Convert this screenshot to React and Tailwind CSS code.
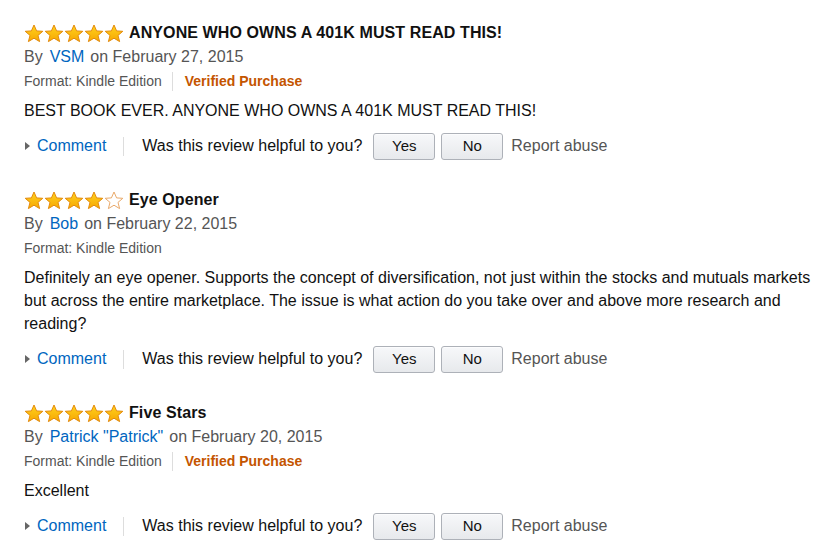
import React from 'react';

const reviews = [
  {
    rating: 5,
    title: 'ANYONE WHO OWNS A 401K MUST READ THIS!',
    author: 'VSM',
    date: 'February 27, 2015',
    verified: true,
    body: 'BEST BOOK EVER. ANYONE WHO OWNS A 401K MUST READ THIS!',
  },
  {
    rating: 4,
    title: 'Eye Opener',
    author: 'Bob',
    date: 'February 22, 2015',
    verified: false,
    body:
      'Definitely an eye opener. Supports the concept of diversification, not just within the stocks and mutuals markets but across the entire marketplace. The issue is what action do you take over and above more research and reading?',
  },
  {
    rating: 5,
    title: 'Five Stars',
    author: 'Patrick "Patrick"',
    date: 'February 20, 2015',
    verified: true,
    body: 'Excellent',
  },
];

// single star, filled or outlined
const Star = ({ filled }) => (
  <svg width="20" height="19" viewBox="0 0 20 19" className="block">
    <defs>
      <linearGradient id="starFill" x1="0" y1="0" x2="0" y2="1">
        <stop offset="0" stopColor="#ffd21f" />
        <stop offset="1" stopColor="#f7a800" />
      </linearGradient>
    </defs>
    <polygon
      points="10,1 12.6,6.9 18.8,7.3 14,11.4 15.6,17.6 10,14.2 4.4,17.6 6,11.4 1.2,7.3 7.4,6.9"
      fill={filled ? 'url(#starFill)' : '#ffffff'}
      stroke={filled ? '#e38b0c' : '#e9a96a'}
      strokeWidth="1"
      strokeLinejoin="round"
    />
  </svg>
);

const Stars = ({ rating }) => (
  <div className="flex items-center">
    {[1, 2, 3, 4, 5].map((i) => (
      <Star key={i} filled={i <= rating} />
    ))}
  </div>
);

const VoteButton = ({ children }) => (
  <button className="h-[27px] w-[62px] rounded-[3px] border border-[#adb1b8] bg-gradient-to-b from-[#f7f8fa] to-[#e7e9ec] text-[15px] text-[#111] shadow-[inset_0_1px_0_rgba(255,255,255,0.6)]">
    {children}
  </button>
);

const Review = ({ r }) => (
  <div className="mb-[28px]">
    <div className="flex h-[24px] items-center">
      <Stars rating={r.rating} />
      <span className="ml-[5px] text-[16px] font-bold tracking-[0.1px] text-[#111]">{r.title}</span>
    </div>
    <div className="flex h-[24px] items-center text-[16px] text-[#555]">
      By<span className="ml-[7px] mr-[6px] text-[#0066c0]">{r.author}</span>on {r.date}
    </div>
    <div className="flex h-[24px] items-center text-[14px] text-[#555]">
      <span>Format: Kindle Edition</span>
      {r.verified && (
        <>
          <span className="ml-[10px] mr-[12px] h-[19px] w-px bg-[#ddd]" />
          <span className="font-bold text-[#c45500]">Verified Purchase</span>
        </>
      )}
    </div>
    <p className="mt-[6px] text-[16px] leading-[23px] text-[#111]">{r.body}</p>
    <div className="mt-[10px] flex h-[28px] items-center text-[16px]">
      <svg width="5" height="8" viewBox="0 0 5 8" className="ml-px">
        <polygon points="0,0 5,4 0,8" fill="#666" />
      </svg>
      <span className="ml-[7px] text-[#0066c0]">Comment</span>
      <span className="ml-[17px] h-[19px] w-px bg-[#ddd]" />
      <span className="ml-[18px] text-[#111]">Was this review helpful to you?</span>
      <div className="ml-[11px] flex gap-[6px]">
        <VoteButton>Yes</VoteButton>
        <VoteButton>No</VoteButton>
      </div>
      <span className="ml-[8px] text-[#555]">Report abuse</span>
    </div>
  </div>
);

export default function App() {
  return (
    <div className="min-h-[545px] w-[840px] bg-white pl-[24px] pr-[10px] pt-[21px] font-['Liberation_Sans',Arial,sans-serif]">
      {reviews.map((r, i) => (
        <Review key={i} r={r} />
      ))}
    </div>
  );
}
